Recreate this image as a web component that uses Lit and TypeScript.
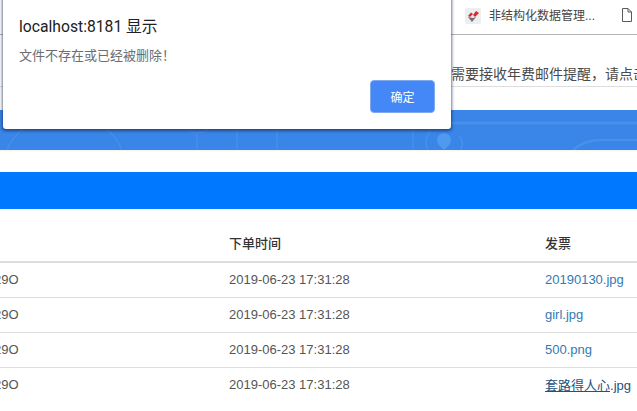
import { LitElement, html, css, svg } from "lit";
import { customElement } from "lit/decorators.js";

const rows = [
  { file: "20190130.jpg", hover: false },
  { file: "girl.jpg", hover: false },
  { file: "500.png", hover: false },
  { file: "套路得人心", ext: ".jpg", hover: true },
];

@customElement("app-root")
export class AppRoot extends LitElement {
  static styles = css`
    :host {
      display: block;
      position: relative;
      width: 637px;
      height: 411px;
      overflow: hidden;
      background: #fff;
      font-family: "Liberation Sans", "Noto Sans CJK SC", sans-serif;
      font-size: 13px;
      color: #555;
    }
    .tabs {
      height: 26px;
      padding: 8px 5px 0 465px;
      display: flex;
      align-items: flex-start;
      border-bottom: 1px solid #b4b4b4;
      font-size: 12px;
      color: #444;
    }
    .fav { width: 16px; height: 16px; flex: none; }
    .tab-title { margin-left: 8px; line-height: 17px; white-space: nowrap; width: 133px; flex: none; }
    .doc { width: 10px; height: 14px; flex: none; }
    .notice {
      height: 52px;
      box-sizing: border-box;
      border-bottom: 1px solid #ddd;
      padding: 29px 0 0 451px;
      font-size: 14px;
      line-height: 20px;
      color: #4a4a4a;
      white-space: nowrap;
      overflow: hidden;
    }
    .banner {
      margin-top: 23px;
      height: 40px;
      background: #3a85e8;
      display: block;
      width: 100%;
    }
    .banner svg { display: block; }
    .strip {
      height: 22px;
      box-shadow: inset 0 2px 2px -1px #f2f2f2;
    }
    .bar { height: 37px; background: #0078ff; }
    .table { overflow: hidden; }
    .row {
      display: grid;
      grid-template-columns: 229px 316px 1fr;
      height: 35px;
      box-sizing: border-box;
      border-bottom: 1px solid #ddd;
      padding-bottom: 2px;
      align-items: center;
      white-space: nowrap;
    }
    .row.head {
      margin-top: 16px;
      height: 38px;
      border-bottom: 2px solid #ddd;
      font-weight: 500;
      color: #333;
    }
    .row.last { border-bottom: none; }
    .id { margin-left: -6px; }
    a { color: #337ab7; text-decoration: none; }
    a.hover { color: #23527c; }
    a.hover span { text-decoration: underline; }
    .dialog {
      position: absolute;
      left: 3px;
      top: -10px;
      width: 448px;
      height: 139px;
      box-sizing: border-box;
      background: #fff;
      border-radius: 3px;
      box-shadow: 0 1px 3px 1px rgba(15, 35, 75, 0.6);
      padding: 27px 16px 16px;
      display: flex;
      flex-direction: column;
    }
    .d-title {
      font-family: Roboto, "Noto Sans CJK SC", sans-serif;
      font-size: 15.7px;
      line-height: 20px;
      color: #202124;
      white-space: nowrap;
    }
    .d-msg {
      margin-top: 9px;
      font-family: "Noto Sans CJK SC", sans-serif;
      font-size: 13px;
      line-height: 18px;
      color: #6a6d72;
    }
    .d-actions { margin-top: auto; display: flex; justify-content: flex-end; }
    .d-btn {
      width: 65px;
      height: 33px;
      box-sizing: border-box;
      border: 1px solid #80a9f0;
      border-radius: 4px;
      background: #4487f6;
      color: #fff;
      font-family: "Noto Sans CJK SC", sans-serif;
      font-size: 12px;
      padding: 0;
      margin: 0;
    }
  `;

  private bannerArt() {
    const c = "#4791eb";
    return svg`<svg width="637" height="40" viewBox="0 0 637 40" fill="none" stroke=${c} stroke-width="1.2">
      <path d="M7 40 C10 32 15 25 23 19" />
      <path d="M122 40 C119 32 114 25 106 19" />
      <path d="M197 40 V24" />
      <path d="M186 19 C190 24 204 24 208 19" />
      <path d="M237 40 V19" />
      <path d="M277 40 V19" />
      <path d="M413 40 V19" />
      <path d="M451 13 H637" stroke-width="3" />
      <path d="M430 22 C425 28 425 34 428 40" stroke-width="1.5" />
      <path d="M459 26 C463 30 463 35 461 40" stroke-width="1.5" />
      <circle cx="444" cy="30" r="7" fill="#4f99ee" stroke="none" />
      <path d="M438 34 L444 40 L450 34 Z" fill="#4f99ee" stroke="none" />
      <path d="M573 40 C580 34 588 30 600 30 H637" stroke-width="2.5" />
    </svg>`;
  }

  render() {
    return html`
      <div class="tabs">
        <svg class="fav" viewBox="0 0 16 16">
          <rect width="16" height="16" rx="2" fill="#eceef1" />
          <path d="M3 9 L7 14 L11 9 L8 10 Z" fill="#6f7175" />
          <path d="M3 8 L6 4.5 L8 6 L5 9 Z" fill="#e0262c" />
          <path d="M8 7 L11 3 L14 5 L10 9 Z" fill="#e0262c" />
        </svg>
        <span class="tab-title">非结构化数据管理...</span>
        <svg class="doc" viewBox="0 0 10 14" fill="#fff" stroke="#5a5a5a" stroke-width="1">
          <path d="M.5.5 H6 L9.5 4 V13.5 H.5 Z M6 .5 V4 H9.5" />
        </svg>
      </div>
      <div class="notice">需要接收年费邮件提醒，请点击这里进行设置</div>
      <div class="banner">${this.bannerArt()}</div>
      <div class="strip"></div>
      <div class="bar"></div>
      <div class="table">
        <div class="row head">
          <span></span><span>下单时间</span><span>发票</span>
        </div>
        ${rows.map(
          (r, i) => html`
            <div class="row ${i === rows.length - 1 ? "last" : ""}">
              <span class="id">29O</span>
              <span>2019-06-23 17:31:28</span>
              <span>
                <a class=${r.hover ? "hover" : ""} href="#"><span>${r.file}</span>${r.ext ?? ""}</a>
              </span>
            </div>
          `
        )}
      </div>
      <div class="dialog" role="alertdialog">
        <div class="d-title">localhost:8181 显示</div>
        <div class="d-msg">文件不存在或已经被删除！</div>
        <div class="d-actions"><button class="d-btn">确定</button></div>
      </div>
    `;
  }
}
